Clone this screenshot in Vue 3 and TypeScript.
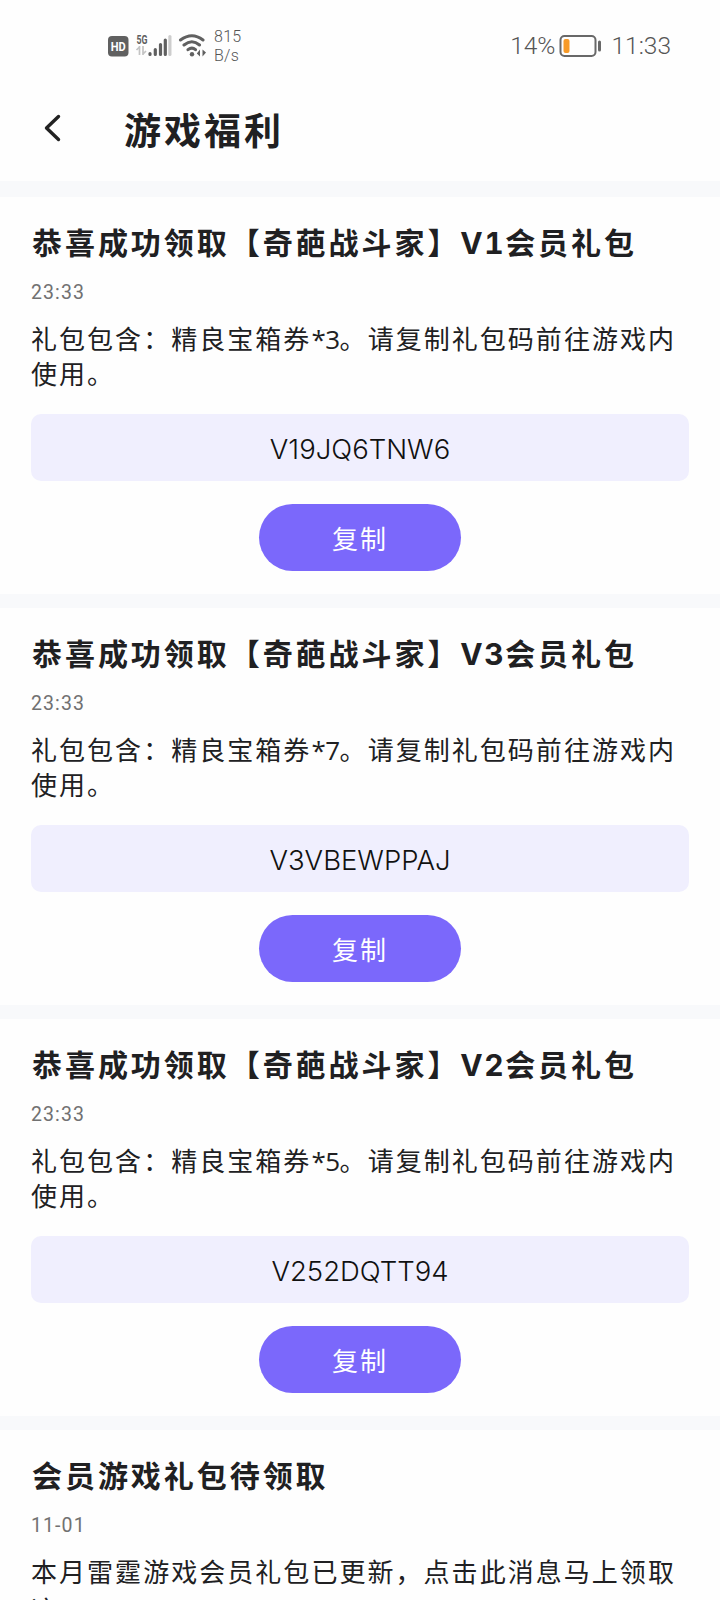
<script setup lang="ts">
interface Gift {
  lead: string
  latin?: string
  tail?: string
  time: string
  lines: string[][]
  code?: string
}

// Even entries of a line are Chinese text, odd entries are Latin runs.
const gift = (level: number, count: number, code: string): Gift => ({
  lead: '恭喜成功领取【奇葩战斗家】',
  latin: `V${level}`,
  tail: '会员礼包',
  time: '23:33',
  lines: [['礼包包含：精良宝箱券', `*${count}`, '。请复制礼包码前往游戏内'], ['使用。']],
  code,
})

const gifts: Gift[] = [
  gift(1, 3, 'V19JQ6TNW6'),
  gift(3, 7, 'V3VBEWPPAJ'),
  gift(2, 5, 'V252DQTT94'),
  {
    lead: '会员游戏礼包待领取',
    time: '11-01',
    lines: [['本月雷霆游戏会员礼包已更新，点击此消息马上领取'], ['这']],
  },
]
</script>

<template>
  <main class="screen">
    <header class="status">
      <svg class="signals" width="106" height="30" viewBox="0 0 106 30">
        <rect x="0" y="5" width="20.500" height="20.500" rx="4" fill="#606060" />
        <text x="10.3" y="20.4" class="hd" textLength="15" lengthAdjust="spacingAndGlyphs">HD</text>
        <text x="28.5" y="12.5" class="fiveg" textLength="11" lengthAdjust="spacingAndGlyphs">5G</text>
        <path d="M31.500 15v9M31.500 16l-3 3M35 15v9M35 23l3-3" stroke="#c4c4c4" stroke-width="1.700" fill="none" />
        <g stroke-width="3.200" stroke-linecap="round" stroke="#606060">
          <path d="M42 22.500v1M47.300 18.500v5M52.500 13.500v10M57.300 9v14.500" />
          <path d="M61.900 5.500v18" stroke="#cdcdcd" />
        </g>
        <g fill="none" stroke="#606060" stroke-width="3" stroke-linecap="round">
          <path d="M72.500 9Q84 0.500 95 9M76 14Q84 7.500 91.500 14M80 18.700Q84 15.500 87.500 18.700" />
        </g>
        <circle cx="84" cy="23.300" r="2.200" fill="#606060" />
        <path d="M92 18.500v7l-3.200-3zM94.500 18.500v7l3.500-4z" fill="#606060" />
      </svg>
      <div class="rate"><span>815</span><span>B/s</span></div>
      <div class="right">
        <span class="percent">14%</span>
        <svg width="44" height="26" viewBox="0 0 44 26">
          <rect x="1.500" y="3" width="35" height="20" rx="4" fill="none" stroke="#686868" stroke-width="2" />
          <rect x="4.500" y="6" width="6" height="14" rx="2" fill="#f79a27" />
          <path d="M40.500 9v8" stroke="#686868" stroke-width="3" stroke-linecap="round" />
        </svg>
        <span class="clock">11:33</span>
      </div>
    </header>

    <nav class="bar">
      <svg class="back" width="18" height="28" viewBox="0 0 18 28">
        <path d="M14.500 2.500L2.500 14l12 11.500" fill="none" stroke="#222" stroke-width="3.400" stroke-linecap="round" stroke-linejoin="round" />
      </svg>
      <h1>游戏福利</h1>
    </nav>

    <article v-for="(g, i) in gifts" :key="i" class="card">
      <h2>{{ g.lead }}<span v-if="g.latin" class="latin">{{ g.latin }}</span>{{ g.tail }}</h2>
      <time>{{ g.time }}</time>
      <div class="desc">
        <p v-for="(line, n) in g.lines" :key="n">
          <span v-for="(run, k) in line" :key="k" :class="{ run: k % 2 === 1 }">{{ run }}</span>
        </p>
      </div>
      <template v-if="g.code">
        <div class="code">{{ g.code }}</div>
        <button type="button">复制</button>
      </template>
    </article>
  </main>
</template>

<style>
body {
  margin: 0;
  background: #fff;
}
</style>

<style scoped>
.screen {
  width: 720px;
  height: 1600px;
  overflow: hidden;
  background: #fefefe;
  color: #202022;
  font-family: 'Noto Sans CJK SC', sans-serif;
}
.status {
  box-sizing: border-box;
  height: 90px;
  padding: 1px 49px 0 108px;
  display: flex;
  align-items: center;
  color: #555;
}
.hd {
  font: 700 13px Roboto, sans-serif;
  fill: #fff;
  text-anchor: middle;
}
.fiveg {
  font: 700 12px Roboto, sans-serif;
  fill: #606060;
}
.rate {
  margin-left: 0;
  display: flex;
  flex-direction: column;
  font: 300 16px/19px Roboto, sans-serif;
  letter-spacing: 0.3px;
}
.right {
  margin-left: auto;
  display: flex;
  align-items: center;
  font: 300 24.500px/30px Roboto, sans-serif;
}
.percent {
  margin-right: 4px;
}
.clock {
  margin-left: 8px;
}
.bar {
  box-sizing: border-box;
  height: 91px;
  padding: 0 44px;
  display: flex;
  align-items: flex-start;
}
.back {
  margin-top: 24px;
}
h1 {
  margin: 12px 0 0 62px;
  font-size: 37px;
  line-height: 54px;
  font-weight: 700;
  letter-spacing: 3px;
}
.card {
  box-sizing: border-box;
  height: 411px;
  padding: 21.500px 31px 0;
  border-top: 14px solid #f8f9fb;
  display: flex;
  flex-direction: column;
  white-space: nowrap;
}
.bar + .card {
  height: 413px;
  border-top-width: 16px;
}
h2 {
  margin: 0 0 0 1px;
  height: 44px;
  font-size: 30px;
  line-height: 44px;
  font-weight: 700;
  letter-spacing: 2.950px;
}
.latin {
  font-family: Inter, sans-serif;
  font-variant-numeric: tabular-nums;
  line-height: 0;
  letter-spacing: 1.500px;
}
time {
  margin-top: 18.500px;
  font: 400 19.500px/24px Roboto, sans-serif;
  letter-spacing: 1.100px;
  color: #717171;
}
.desc {
  margin-top: 14.500px;
}
p {
  margin: 0;
  height: 35.250px;
  font-size: 26px;
  line-height: 35px;
  letter-spacing: 2.040px;
}
.card:last-child p + p {
  margin-top: 3px;
}
.run {
  font-family: 'Open Sans', sans-serif;
  line-height: 0;
  letter-spacing: -0.500px;
}
.code {
  flex: none;
  height: 67px;
  margin-top: 23.500px;
  border-radius: 10px;
  background: #f0effe;
  text-align: center;
  color: #111;
  font: 300 27.500px/70px Inter, sans-serif;
  letter-spacing: 0;
}
button {
  flex: none;
  align-self: center;
  width: 202px;
  height: 67px;
  margin-top: 23px;
  padding: 0;
  border: 0;
  border-radius: 34px;
  background: #7b68fb;
  color: #fff;
  font: 400 26px/67px 'Noto Sans CJK SC', sans-serif;
  letter-spacing: 2px;
}
</style>
